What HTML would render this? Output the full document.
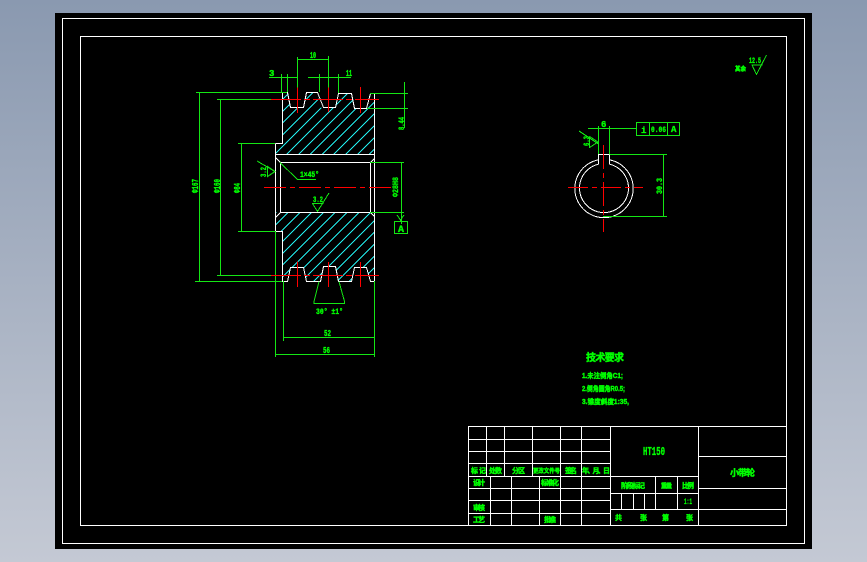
<!DOCTYPE html>
<html><head><meta charset="utf-8">
<style>
html,body{margin:0;padding:0;width:867px;height:562px;overflow:hidden;background:linear-gradient(180deg,#8a99b0 0%,#c4c9d4 100%)}
svg{position:absolute;left:0;top:0;display:block}
text{font-family:"Liberation Mono","Noto Sans CJK SC",monospace;font-weight:bold;fill:#0f0;stroke:#0f0;stroke-width:.35}
.c{font-family:"Liberation Sans","Noto Sans CJK SC",sans-serif;font-weight:bold;stroke-width:.45}
.w{fill:none;stroke:#fff;stroke-width:1}
.g{fill:none;stroke:#14e614;stroke-width:1}
.r{fill:none;stroke:#f00;stroke-width:1}
.d{stroke-dasharray:22 4 5 4}
</style></head><body>
<svg width="867" height="562" viewBox="0 0 867 562" xmlns="http://www.w3.org/2000/svg">
<defs>
<clipPath id="h1"><polygon points="282.3,92.7 287.3,92.7 290.7,107.7 303.3,107.7 306.7,92.7 317.3,92.7 320.7,107.7 335,107.7 338.3,93 351,93 354.7,108 366.7,108 370,93 374.3,93 374.3,154.3 275.5,154.3 275.5,143.3 282.3,143.3"/></clipPath>
<clipPath id="h2"><polygon points="275.5,212.3 374.3,212.3 374.3,281.3 370,281.3 366.7,267.3 354.7,267.3 351,281.3 338.3,281.3 335,266.3 323.3,266.3 320,281.3 306.7,281.3 303.3,267.3 290.7,267.3 287.3,281.3 282.3,281.3 282.3,231.3 275.5,231.3"/></clipPath>
</defs>
<rect x="55" y="13" width="757" height="536" fill="#000"/>
<g shape-rendering="crispEdges">
<rect x="62.5" y="18.5" width="742" height="525" class="w"/>
<rect x="80.5" y="36.5" width="706" height="489" class="w"/>

<!-- hatch -->
<g clip-path="url(#h1)"><path stroke="#2ee" stroke-width="1" fill="none" d="M260 110L400 -30M260 122L400 -18M260 134L400 -6M260 145.6L400 5.6M260 157.4L400 17.4M260 169.2L400 29.2M260 181L400 41M260 192.8L400 52.8M260 204.6L400 64.6M260 216.4L400 76.4M260 228.2L400 88.2M260 240L400 100M260 251.8L400 111.8M260 263.6L400 123.6"/></g>
<g clip-path="url(#h2)"><path stroke="#2ee" stroke-width="1" fill="none" d="M260 228.7L400 88.7M260 240.5L400 100.5M260 252.3L400 112.3M260 264.1L400 124.1M260 275.9L400 135.9M260 287.7L400 147.7M260 299.5L400 159.5M260 311.3L400 171.3M260 323.1L400 183.1M260 334.9L400 194.9M260 346.7L400 206.7M260 358.5L400 218.5M260 370.3L400 230.3M260 382.1L400 242.1"/></g>

<!-- pulley outline -->
<path class="w" d="M275.5 231.5V157.5L280.5 162.5H370.5L374.5 158.5M275.5 143.5H282.5V92.5H287.5L290.5 107.5H303.5L306.5 92.5H317.5L323.5 107.5H335.5L338.5 93.5H351.5L354.5 108.5H366.5L370.5 93.5H374.5V281.5H370.5L366.5 267.5H354.5L351.5 281.5H338.5L335.5 266.5H323.5L320.5 281.5H306.5L303.5 267.5H290.5L287.5 281.5H282.5V231.5H275.5M275.5 143.5V157.5M275.5 154.5H374.5M280.5 162.5V212.5M370.5 162.5V212.5M275.5 217.5L280.5 212.5H370.5L374.5 216.5"/>

<!-- green dims -->
<path class="g" d="M196 92.5H287M199.5 92.5V281.5M195 281.5H282M217 99.5H271M220.5 99.5V275.5M217 275.5H271M238 143.5H275M241.5 143.5V231.5M238 231.5H275"/>
<path class="g" d="M297.5 57V100M328.5 56V100M297.5 59.5H328.5M269 77.5H297.5M281.5 74V92M287.5 74V92M308 77.5H351M319.5 74V92M338.5 74V93"/>
<path class="g" d="M370 93.5H408M367 108.5H408M404.5 82V128"/>
<path class="g" d="M370 162.5H404M401.5 162.5V224M370 212.5H404M400.5 219V222"/>
<rect x="394.5" y="221.5" width="13" height="12" class="g"/>
<path class="g" d="M397 215L400.5 220L404 215" />
<path class="g" d="M257 161L275 171.5L267.5 176.5V166.5L275 171.5M280 162.5L297.5 179.5H316"/>
<path class="g" d="M329 193L317.5 211.5L312.5 203.5H323.5"/>
<path class="g" d="M319 281.5L314 301.5V304M339 281.5L344.5 301.5V304M314 303.5H344M283.5 281V341M283.5 337.5H374.5M275.5 231V357M374.5 281V357M275.5 354.5H374.5"/>

<!-- centre lines -->
<path class="r" d="M271 99.5H379" stroke-dasharray="30 3 6 3"/>
<path class="r" d="M271 275.5H379" stroke-dasharray="30 3 6 3"/>
<path class="r d" d="M264 187.5H393"/>
<path class="r" d="M297.5 87.5V113M328.5 87.5V112M360.5 87V113M297.5 261.5V287M328.5 262V287M360.5 262V287"/>

<!-- side view -->
<path class="w" d="M598.5 159.8A29.2 29.2 0 1 0 609.5 159.8M598.5 164.2A24.5 24.5 0 1 0 609.5 164.2M598.5 164V154.5H609.5V164"/>
<path class="r" d="M568 187.5H643" stroke-dasharray="20 4 5 4"/>
<path class="r" d="M603.5 145V232" stroke-dasharray="24 4 5 4"/>
<path class="g" d="M588 128.5H637M598.5 126V154M609.5 126V154M609.5 154.5H667M603 216.5H667M663.5 154V216"/>
<rect x="636.5" y="122.5" width="43" height="13" class="g"/>
<path class="g" d="M649.5 123V135M667.5 123V135M579 131L598.5 144M589.5 136.5V147.5L598 142L589.5 136.5"/>

<!-- top-right roughness -->
<path class="g" d="M751.5 65H762.5M752 65L756.5 74.5L766.5 55"/>

<!-- title block -->
<path class="w" d="M468.5 426.5H786.5V525.5H468.5ZM468.5 439.5H610.5M468.5 451.5H610.5M468.5 463.5H610.5M468.5 476.5H698.5M468.5 488.5H610.5M468.5 500.5H610.5M468.5 513.5H610.5M610.5 493.5H698.5M610.5 509.5H786.5M698.5 456.5H786.5M698.5 488.5H786.5"/>
<path class="w" d="M486.5 426.5V476.5M504.5 426.5V476.5M532.5 426.5V476.5M490.5 476.5V525.5M511.5 476.5V525.5M539.5 476.5V525.5M560.5 426.5V525.5M581.5 426.5V525.5M610.5 426.5V525.5M698.5 426.5V525.5M655.5 476.5V509.5M677.5 476.5V509.5M621.5 493.5V509.5M633.5 493.5V509.5M644.5 493.5V509.5"/>
</g>

<!-- texts -->
<text x="310" y="58" font-size="9" textLength="6" lengthAdjust="spacingAndGlyphs">10</text>
<text x="269" y="76" font-size="9">3</text>
<text x="346" y="76" font-size="9" textLength="6" lengthAdjust="spacingAndGlyphs">11</text>
<text transform="translate(198,193) rotate(-90)" font-size="9" textLength="14" lengthAdjust="spacingAndGlyphs">Φ167</text>
<text transform="translate(220,193) rotate(-90)" font-size="9" textLength="14" lengthAdjust="spacingAndGlyphs">Φ160</text>
<text transform="translate(240,193) rotate(-90)" font-size="9" textLength="10" lengthAdjust="spacingAndGlyphs">Φ84</text>
<text transform="translate(404,130) rotate(-90)" font-size="8" textLength="13" lengthAdjust="spacingAndGlyphs">8.44</text>
<text x="300" y="177" font-size="8" textLength="19" lengthAdjust="spacingAndGlyphs">1×45°</text>
<text transform="translate(266,177) rotate(-90)" font-size="8" textLength="10" lengthAdjust="spacingAndGlyphs">3.2</text>
<text x="313" y="202" font-size="8" textLength="10" lengthAdjust="spacingAndGlyphs">3.2</text>
<text transform="translate(398,197) rotate(-90)" font-size="8" textLength="20" lengthAdjust="spacingAndGlyphs">Φ28H8</text>
<text x="398" y="232" font-size="10" textLength="6" lengthAdjust="spacingAndGlyphs">A</text>
<text x="316" y="314" font-size="8" textLength="27" lengthAdjust="spacingAndGlyphs">30° ±1°</text>
<text x="324" y="336" font-size="9" textLength="7" lengthAdjust="spacingAndGlyphs">52</text>
<text x="323" y="353" font-size="9" textLength="7" lengthAdjust="spacingAndGlyphs">56</text>
<text x="601" y="127" font-size="9">6</text>
<text transform="translate(589,146) rotate(-90)" font-size="8" textLength="10" lengthAdjust="spacingAndGlyphs">6.3</text>
<text transform="translate(662,194) rotate(-90)" font-size="8" textLength="16" lengthAdjust="spacingAndGlyphs">30.3</text>
<text x="641" y="133" font-size="9">i</text>
<text x="651" y="132" font-size="8" textLength="15" lengthAdjust="spacingAndGlyphs">0.06</text>
<text x="671" y="132" font-size="9">A</text>
<text x="735" y="71" class="c" font-size="6" textLength="11" lengthAdjust="spacingAndGlyphs">其余</text>
<text x="749" y="63" font-size="8" textLength="12" lengthAdjust="spacingAndGlyphs">12.5</text>

<text x="586" y="361" class="c" font-size="10" textLength="38" lengthAdjust="spacing">技术要求</text>
<text x="582" y="378" class="c" font-size="7" textLength="41" lengthAdjust="spacingAndGlyphs">1.未注倒角C1;</text>
<text x="582" y="391" class="c" font-size="7" textLength="43" lengthAdjust="spacingAndGlyphs">2.倒角圆角R0.5;</text>
<text x="582" y="404" class="c" font-size="7" textLength="47" lengthAdjust="spacingAndGlyphs">3.锥度斜度1:35,</text>

<text x="643" y="455" font-size="12" textLength="22" lengthAdjust="spacingAndGlyphs">HT150</text>
<text x="730" y="476" class="c" font-size="9" textLength="25" lengthAdjust="spacing">小带轮</text>
<text class="c" x="471" y="473" textLength="15" font-size="7" lengthAdjust="spacing">标记</text>
<text class="c" x="489" y="473" textLength="13" font-size="7" lengthAdjust="spacing">处数</text>
<text class="c" x="512" y="473" textLength="13" font-size="7" lengthAdjust="spacing">分区</text>
<text class="c" x="533" y="473" textLength="27" font-size="6" lengthAdjust="spacingAndGlyphs">更改文件号</text>
<text class="c" x="565" y="473" textLength="12" font-size="7" lengthAdjust="spacing">签名</text>
<text class="c" x="582" y="473" textLength="28" font-size="7" lengthAdjust="spacing">年、月、日</text>
<text class="c" x="473" y="485" textLength="12" font-size="7" lengthAdjust="spacing">设计</text>
<text class="c" x="541" y="485" textLength="18" font-size="7" lengthAdjust="spacing">标准化</text>
<text class="c" x="473" y="510" textLength="12" font-size="7" lengthAdjust="spacing">审核</text>
<text class="c" x="473" y="522" textLength="12" font-size="7" lengthAdjust="spacing">工艺</text>
<text class="c" x="544" y="522" textLength="12" font-size="7" lengthAdjust="spacing">批准</text>
<text class="c" x="621" y="488" textLength="24" font-size="7" lengthAdjust="spacing">阶段标记</text>
<text class="c" x="661" y="488" textLength="11" font-size="6" lengthAdjust="spacing">重量</text>
<text class="c" x="682" y="488" textLength="12" font-size="7" lengthAdjust="spacing">比例</text>
<text x="684" y="504" font-size="8" textLength="8" lengthAdjust="spacingAndGlyphs">1:1</text>
<text class="c" x="615" y="520" font-size="7">共</text>
<text class="c" x="640" y="520" font-size="7">张</text>
<text class="c" x="662" y="520" font-size="7">第</text>
<text class="c" x="686" y="520" font-size="7">张</text>
</svg>
</body></html>
